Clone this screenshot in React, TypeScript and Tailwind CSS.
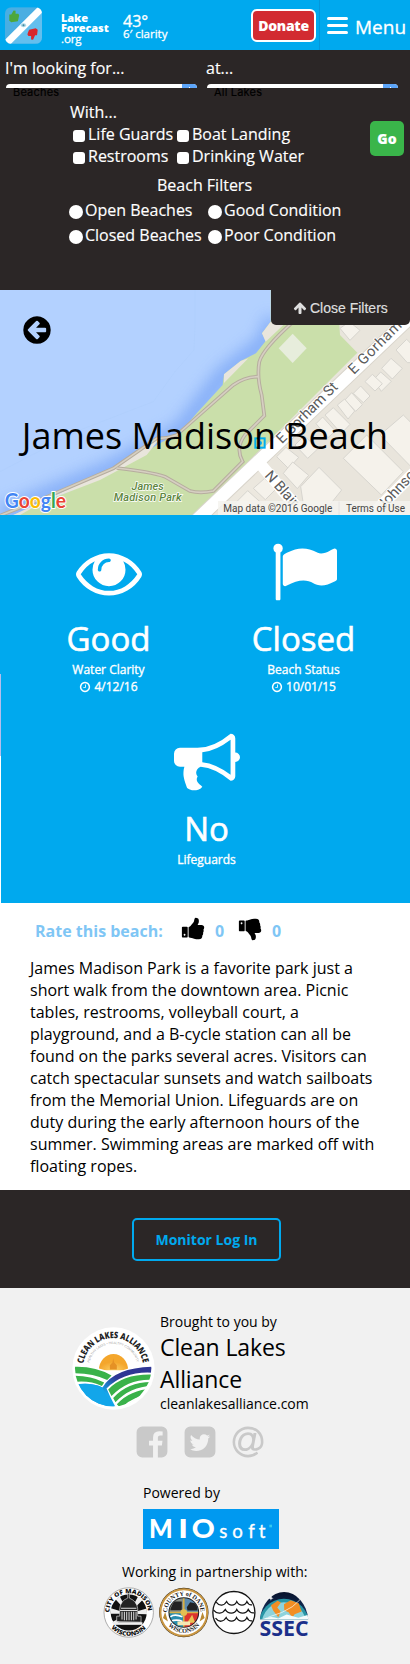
import type { ReactNode } from 'react';

const icons = {
  eye: 'M1664 960q-152-236-381-353 61 104 61 225 0 185-131.5 316.5t-316.5 131.5-316.5-131.5-131.5-316.5q0-121 61-225-229 117-381 353 133 205 333.5 326.5t434.5 121.5 434.5-121.5 333.5-326.5zm-720-384q0-20-14-34t-34-14q-125 0-214.5 89.5t-89.5 214.5q0 20 14 34t34 14 34-14 14-34q0-86 61-147t147-61q20 0 34-14t14-34zm848 384q0 34-20 69-140 230-376.5 368.5t-499.5 138.5-499.5-139-376.5-368q-20-35-20-69t20-69q140-229 376.5-368t499.5-139 499.5 139 376.5 368q20 35 20 69z',
  flag: 'M320 256q0 72-64 110v1266q0 13-9.5 22.5t-22.5 9.5h-64q-13 0-22.5-9.5t-9.5-22.5v-1266q-64-38-64-110 0-53 37.5-90.5t90.5-37.5 90.5 37.5 37.5 90.5zm1472 64v763q0 25-12.5 38.5t-39.5 27.5q-215 116-369 116-61 0-123.5-22t-108.5-48-115.5-48-142.5-22q-192 0-464 146-17 9-33 9-26 0-45-19t-19-45v-742q0-32 31-55 21-14 79-43 236-120 421-120 107 0 200 29t219 88q38 19 88 19 54 0 117.5-21t110-47 88-47 54.5-21q26 0 45 19t19 45z',
  bullhorn: 'M1664 640q53 0 90.5 37.5t37.5 90.5-37.5 90.5-90.5 37.5v384q0 52-38 90t-90 38q-417-347-812-380-58 19-91 66t-31 100.5 40 92.5q-20 33-23 65.5t6 58 33.5 55 48 50 61.5 50.5q-29 58-111.5 83t-168.5 11.5-132-55.5q-7-23-29.5-87.5t-32-94.5-23-89-15-101 3.5-98.5 22-110.5h-122q-66 0-113-47t-47-113v-192q0-66 47-113t113-47h480q435 0 896-384 52 0 90 38t38 90v384zm-128 604v-954q-394 302-768 343v270q377 42 768 341z',
  clock: 'M1024 544v448q0 14-9 23t-23 9h-320q-14 0-23-9t-9-23v-64q0-14 9-23t23-9h224v-352q0-14 9-23t23-9h64q14 0 23 9t9 23zm416 352q0-148-73-273t-198-198-273-73-273 73-198 198-73 273 73 273 198 198 273 73 273-73 198-198 73-273zm224 0q0 209-103 385.5t-279.5 279.5-385.5 103-385.5-103-279.5-279.5-103-385.5 103-385.5 279.5-279.5 385.5-103 385.5 103 279.5 279.5 103 385.5z',
  thumb: 'M320 1344q0-26-19-45t-45-19q-27 0-45.5 19t-18.5 45q0 27 18.5 45.5t45.5 18.5q26 0 45-18.5t19-45.5zm160-512v640q0 26-19 45t-45 19h-288q-26 0-45-19t-19-45v-640q0-26 19-45t45-19h288q26 0 45 19t19 45zm1184 0q0 86-55 149 15 44 15 76 3 76-43 137 17 56 0 117-15 57-54 94 9 112-49 181-64 76-197 78h-129q-66 0-144-15.5t-121.5-29-120.5-39.5q-123-43-158-44-26-1-45-19.5t-19-44.5v-641q0-25 18-43.5t43-20.5q24-2 76-59t101-121q68-87 101-120 18-18 31-48t17.5-48.5 13.5-60.5q7-39 12.5-61t19.5-52 34-50q19-19 45-19 46 0 82.5 10.5t60 26 40 40.5 24 45 12 50 5 45 .5 39q0 38-9.5 76t-19 60-27.5 56q-3 6-10 18t-11 22-8 24h277q78 0 135 57t57 135z',
  back: 'M1408 960v-128q0-26-19-45t-45-19h-502l189-189q19-19 19-45t-19-45l-91-91q-18-18-45-18t-45 18l-362 362-91 91q-18 18-18 45t18 45l91 91 362 362q18 18 45 18t45-18l91-91q18-18 18-45t-18-45l-189-189h502q26 0 45-19t19-45zm256-64q0 209-103 385.5t-279.5 279.5-385.5 103-385.5-103-279.5-279.5-103-385.5 103-385.5 279.5-279.5 385.5-103 385.5 103 279.5 279.5 103 385.5z',
  up: 'M1675 971q0 51-37 90l-75 75q-38 38-91 38-54 0-90-38l-294-293v704q0 52-37.5 84.5t-90.5 32.5h-128q-53 0-90.5-32.5t-37.5-84.5v-704l-294 293q-36 38-90 38t-90-38l-75-75q-38-38-38-90 0-53 38-91l651-651q35-37 90-37 54 0 91 37l651 651q37 39 37 91z',
  facebook: 'M1376 128q119 0 203.5 84.5t84.5 203.5v960q0 119-84.5 203.5t-203.5 84.5h-188v-595h199l30-232h-229v-148q0-56 23.5-84t91.5-28l122-1v-207q-63-9-178-9-136 0-217.5 80t-81.5 226v171h-200v232h200v595h-532q-119 0-203.5-84.5t-84.5-203.5v-960q0-119 84.5-203.5t203.5-84.5h960z',
  twitter: 'M1408 610q-56 25-121 34 68-40 93-117-65 38-134 51-61-66-153-66-87 0-148.5 61.5t-61.5 148.5q0 29 5 48-129-7-242-65t-192-155q-29 50-29 106 0 114 91 175-47-1-100-26v2q0 75 50 133.5t123 72.5q-29 8-51 8-13 0-39-4 21 63 74.5 104t121.5 42q-116 90-261 90-26 0-50-3 148 94 322 94 112 0 210-35.5t168-95 120.5-137 75-162 24.5-168.5q0-18-1-27 63-45 105-109zm256-194v960q0 119-84.5 203.5t-203.5 84.5h-960q-119 0-203.5-84.5t-84.5-203.5v-960q0-119 84.5-203.5t203.5-84.5h960q119 0 203.5 84.5t84.5 203.5z',
  at: 'M1100 775q0-108-53.5-169t-147.5-61q-63 0-124 30.5t-110 84.5-79.5 137-30.5 180q0 112 53.5 173t150.5 61q96 0 176-66.5t122.5-166 42.5-203.5zm564 121q0 111-37 197t-98.5 135-131.5 74.5-145 27.5q-6 .5-15.5.5t-16.5.5q-95 0-142-53-28-33-33-83-52 66-131.5 110t-173.5 44q-161 0-249.5-95.5t-88.5-269.5q0-157 66-290t179-210.5 246-77.5q87 0 155 35.5t106 99.5l2-19 11-56q1-6 5.5-12t9.5-6h118q5 0 13 11 5 5 3 16l-120 614q-5 24-5 48 0 39 12.5 52t44.5 13q28-1 57-5.5t73-24 77-50 57-89.5 24-137q0-292-174-466t-466-174q-130 0-248.5 51t-204 136.5-136.5 204-51 248.5 51 248.5 136.5 204 204 136.5 248.5 51q228 0 405-144 11-9 24-8t21 12l41 49q8 12 7 24-2 13-12 22-102 83-227.5 128t-258.5 45q-156 0-298-61t-245-164-164-245-61-298 61-298 164-245 245-164 298-61q344 0 556 212t212 556z',
};

function Icon({ name, className }: { name: keyof typeof icons; className: string }) {
  return (
    <svg viewBox="0 0 1792 1792" fill="currentColor" className={className}>
      <path d={icons[name]} />
    </svg>
  );
}

function AppLogo() {
  return (
    <svg viewBox="15 21 112 111" className="mt-[7px] h-[37px] w-[37px] shrink-0">
      <defs>
        <clipPath id="app-clip">
          <rect x="15" y="21" width="112" height="111" rx="19" />
        </clipPath>
      </defs>
      <g clipPath="url(#app-clip)">
        <rect x="15" y="21" width="112" height="111" fill="#4aaee2" />
        <path d="M127 21V132H30z" fill="#63bfee" />
        <path d="M10 125L118 17L133 32L28 137z" fill="#fff" />
        <ellipse cx="71" cy="76" rx="8" ry="6" fill="#a9d8e8" />
        <circle cx="71" cy="76" r="3" fill="#47859a" />
        <path d="M28 43h6l7-12 6 1v9h8q5 3 2 9l-3 14-20 3-6-5z" fill="#4da73c" />
        <path d="M112 106h-6l-6 14-6-1v-11h-8q-5-4-2-9l4-10 20-4 6 4z" fill="#d8262d" />
      </g>
    </svg>
  );
}

function Header() {
  return (
    <header className="flex h-[50px] bg-[#00a9ee] pl-[5px] text-white">
      <AppLogo />
      <div className="ml-[19px] w-[62px] pt-[13px] text-[11px] leading-[10px] font-extrabold tracking-[-0.1px]">
        <p>Lake</p>
        <p>Forecast</p>
        <p className="pt-px text-[11.5px] font-normal [-webkit-text-stroke:0.3px_white]">.org</p>
      </div>
      <div className="w-[128px] pt-[12px]">
        <p className="text-base leading-[19px] [-webkit-text-stroke:0.35px_white]">43°</p>
        <p className="text-[11.5px] leading-[6px] [-webkit-text-stroke:0.3px_white]">6′ clarity</p>
      </div>
      <button className="mt-[9px] h-[33px] w-[65px] rounded-[6px] border-2 border-white bg-[#d22b31] text-[14px] leading-[29px] font-extrabold tracking-[-0.3px]">
        Donate
      </button>
      <div className="ml-[3px] flex flex-1 border-l border-[#0398dc] pl-[7px]">
        <div className="mt-[17px] flex h-[17px] w-[21px] flex-col justify-between">
          <i className="h-[3px] rounded-sm bg-white" />
          <i className="h-[3px] rounded-sm bg-white" />
          <i className="h-[3px] rounded-sm bg-white" />
        </div>
        <span className="ml-[7px] pt-[14px] text-[19px] leading-[27px] [-webkit-text-stroke:0.3px_white]">Menu</span>
      </div>
    </header>
  );
}

function Select({ label, value }: { label: string; value: string }) {
  return (
    <div className="w-[191px]">
      <p className="-ml-px h-[34px] text-base leading-[36px]">{label}</p>
      <div className="flex h-[4px] justify-end overflow-hidden rounded-t-[4px] bg-white">
        <span className="flex w-[15px] items-end justify-center bg-[#5ca4f8]">
          <i className="h-px w-px bg-white" />
        </span>
      </div>
      <p className="pl-[7px] font-[Inter,sans-serif] text-[11px] leading-[9px] tracking-[0.2px] text-black">{value}</p>
    </div>
  );
}

function Check({ label }: { label: string }) {
  return (
    <label className="flex h-[22px] whitespace-nowrap">
      <i className="mt-[6px] mr-[3px] h-[12px] w-[12px] rounded-[3px] bg-white" />
      <span className="leading-[20px]">{label}</span>
    </label>
  );
}

function Radio({ label }: { label: string }) {
  return (
    <label className="flex h-[25px] whitespace-nowrap">
      <i className="mt-[7px] mr-[2px] h-[14px] w-[14px] rounded-full bg-white" />
      <span className="leading-[25px]">{label}</span>
    </label>
  );
}

function Filters() {
  return (
    <section className="h-[240px] bg-[#2b2626] text-white [-webkit-text-stroke:0.15px_currentColor]">
      <div className="flex gap-[10px] pl-[6px]">
        <Select label="I'm looking for..." value="Beaches" />
        <Select label="at..." value="All Lakes" />
      </div>
      <div className="flex justify-between pt-[3px] pr-[6px] pl-[69px]">
        <div>
          <p className="pl-px leading-[24px]">With...</p>
          <div className="grid grid-cols-[104px_auto] pl-[4px]">
            <Check label="Life Guards" />
            <Check label="Boat Landing" />
            <Check label="Restrooms" />
            <Check label="Drinking Water" />
          </div>
          <p className="mt-[4px] pl-[88px] leading-[26px]">Beach Filters</p>
          <div className="grid grid-cols-[139px_auto]">
            <Radio label="Open Beaches" />
            <Radio label="Good Condition" />
            <Radio label="Closed Beaches" />
            <Radio label="Poor Condition" />
          </div>
        </div>
        <button className="mt-[21px] h-[35px] w-[34px] rounded-[5px] bg-[#3ab54a] text-[14px] leading-[35px] font-extrabold">
          Go
        </button>
      </div>
    </section>
  );
}

const buildings = [
  'M1120 285l22-24 32 28-30 30z', 'M1145 250l28-30 34 30-30 32z', 'M1188 195l32-32 20 20v50h-18z',
  'M1095 290l22-22 30 28-22 22z', 'M1035 345l20-22 32 36-20 20z', 'M1060 325l22-22 28 30-20 20z',
  'M1012 360l22-18 30 36-20 24z', 'M975 390l25-22 50 50-26 28z', 'M948 416l20-20 38 42-22 20z',
  'M885 480l28-28 40 40-30 28z', 'M830 515l28-28 38 30-30 34z', 'M850 565l28-34 48 40-34 40z',
  'M902 605l55-58 68 68-60 75h-50z', 'M1030 520l70-70 110 110-66 70z', 'M1140 450l70-60 40 40v90l-20 22z',
  'M760 610l34-30 32 34-30 30z', 'M705 655l38-38 40 36-40 42z', 'M1020 130l28-20 32 26-30 30z',
];

function MapDrawing() {
  return (
    <svg viewBox="0 15 1230 675" className="absolute inset-0 h-full w-full" fontFamily="Roboto, sans-serif">
      <defs>
        <filter id="shore" x="-20%" y="-20%" width="140%" height="140%">
          <feGaussianBlur stdDeviation="24" />
        </filter>
      </defs>
      <path d="M0 0H1230V700H0z" fill="#b3d1ff" />
      <path
        d="M0 690L340 550L545 437L672 270L800 170L820 100"
        fill="none"
        stroke="#78a4f5"
        strokeWidth="50"
        opacity=".85"
        filter="url(#shore)"
      />
      <path d="M585 0V120L582 195L525 260L460 350L240 435L0 560" fill="none" stroke="#a9c9f8" strokeWidth="2" opacity=".4" />
      <path d="M40 690L320 572L440 498L545 437L590 385L668 300L672 268L722 228L768 205L797 168L786 145L812 110V0H1230V690z" fill="#cadfaa" />
      <path d="M672 268L722 228L745 220L672 294zM786 145L812 110L850 120L797 170zM40 690L340 550L480 460L440 510L300 585L130 650L60 690z" fill="#e9e5dc" />
      <path d="M1018 120L1020 150L1072 203L545 730H1230V0H1018z" fill="#e9e5dc" />
      <path d="M600 690L770 525L795 530L905 690z" fill="#ece8df" />
      <g fill="#f5f2eb" stroke="#d7d5cf" strokeWidth="3">
        {buildings.map((d) => (
          <path key={d} d={d} />
        ))}
      </g>
      <path d="M878 146L920 190L878 234L836 190z" fill="#e7eddc" />
      <g fill="none" stroke="#b6ad9e" strokeWidth="11">
        <path d="M880 110Q790 190 778 230Q770 275 785 330L793 392L735 450Q705 490 728 530L640 618Q600 626 570 618L495 575Q450 560 350 549" />
        <path d="M776 275Q735 275 700 300L530 450Q500 462 470 460L340 550L130 640L0 692" />
      </g>
      <g fill="none" stroke="#d6cfc2" strokeWidth="5">
        <path d="M880 110Q790 190 778 230Q770 275 785 330L793 392L735 450Q705 490 728 530L640 618Q600 626 570 618L495 575Q450 560 350 549" />
        <path d="M776 275Q735 275 700 300L530 450Q500 462 470 460L340 550L130 640L0 692" />
      </g>
      <path d="M580 715L1240 88" stroke="#d8d4cb" strokeWidth="44" />
      <path d="M580 715L1240 88" stroke="#fff" strokeWidth="38" />
      <path d="M775 530L910 690M1245 560L1105 700" stroke="#fff" strokeWidth="35" />
      <g fill="#5b5b5b" stroke="#fff" strokeWidth="5" paintOrder="stroke" fontSize="44">
        <text transform="translate(846 478) rotate(-45)" textLength="240">E Gorham St</text>
        <text transform="translate(1062 270) rotate(-45)" textLength="206">E Gorham</text>
        <text transform="translate(792 573) rotate(48)" textLength="128">N Blair</text>
        <text transform="translate(1150 678) rotate(-47)">Johnson</text>
      </g>
      <g fill="#5d8640" stroke="#fff" strokeWidth="4" paintOrder="stroke" fontSize="33" fontStyle="italic" fontWeight="500" textAnchor="middle">
        <text x="443" y="616">James</text>
        <text x="443" y="648" textLength="204">Madison Park</text>
      </g>
      <rect x="766" y="460" width="28" height="28" fill="none" stroke="#00aeef" strokeWidth="6" />
      <circle cx="780" cy="474" r="6" fill="#00aeef" />
      <rect x="654" y="648" width="576" height="42" fill="#f5f3ef" opacity=".85" />
      <path d="M1017 650V690" stroke="#ddd" strokeWidth="2" />
      <g fill="#444" fontSize="30">
        <text x="670" y="681" textLength="327">Map data ©2016 Google</text>
        <text x="1038" y="681" textLength="177">Terms of Use</text>
      </g>
      <text x="14" y="668" fontFamily="Lato, sans-serif" fontSize="64" fontWeight="700" textLength="184" lengthAdjust="spacingAndGlyphs" stroke="#fff" strokeWidth="6" paintOrder="stroke">
        <tspan fill="#4285f4">G</tspan>
        <tspan fill="#ea4335">o</tspan>
        <tspan fill="#fbbc05">o</tspan>
        <tspan fill="#4285f4">g</tspan>
        <tspan fill="#34a853">l</tspan>
        <tspan fill="#ea4335">e</tspan>
      </text>
    </svg>
  );
}

function MapHero() {
  return (
    <section className="relative h-[225px] overflow-hidden">
      <MapDrawing />
      <button className="absolute top-[-3px] right-0 flex h-[38px] w-[139px] items-center rounded-b-[5px] bg-[#2b2626] pl-[22px] font-['Liberation_Sans',sans-serif] text-[14px] text-[#dedede]">
        <Icon name="up" className="mt-[3px] mr-[3px] h-[14px] w-[14px]" />
        <span className="mt-[5px] [-webkit-text-stroke:0.2px_#dedede]">Close Filters</span>
      </button>
      <Icon name="back" className="absolute top-[24px] left-[21px] h-[32px] w-[32px] text-black" />
      <h1 className="absolute top-[121px] left-0 w-full text-center text-[36px] leading-[50px] whitespace-nowrap text-black">
        James Madison Beach
      </h1>
    </section>
  );
}

function Stat({ icon, value, label, date }: { icon: keyof typeof icons; value: string; label: string; date?: string }) {
  return (
    <div className="flex flex-col items-center">
      <Icon name={icon} className="h-[66px] w-[66px]" />
      <p className="mt-[11px] text-[33px] leading-[46px] [-webkit-text-stroke:0.6px_white]">{value}</p>
      <p className="-mt-px text-[12px] leading-[17px] [-webkit-text-stroke:0.35px_white]">{label}</p>
      {date && (
        <p className="flex items-center text-[12px] leading-[17px] [-webkit-text-stroke:0.35px_white]">
          <Icon name="clock" className="mr-[3px] h-[12px] w-[12px]" />
          {date}
        </p>
      )}
    </div>
  );
}

function Stats() {
  return (
    <section className="flex h-[388px]">
      <div className="flex w-px flex-col">
        <i className="h-[159px] bg-[#00a9ee]" />
        <i className="h-[82px] bg-[#b5bdec]" />
      </div>
      <div className="flex-1 bg-[#00a9ee] pt-[24px] text-white">
        <div className="grid h-[190px] grid-cols-[195px_195px] pl-[10px]">
          <Stat icon="eye" value="Good" label="Water Clarity" date="4/12/16" />
          <Stat icon="flag" value="Closed" label="Beach Status" date="10/01/15" />
        </div>
        <div className="pl-[2px]">
          <Stat icon="bullhorn" value="No" label="Lifeguards" />
        </div>
      </div>
    </section>
  );
}

function Details() {
  return (
    <section className="h-[287px] bg-white">
      <div className="flex h-[53px] pt-[12px] pl-[35px] text-base leading-[32px] font-bold text-[#7fc6f5]">
        <span className="w-[146px]">Rate this beach:</span>
        <Icon name="thumb" className="mt-px h-[25px] w-[25px] text-black" />
        <span className="ml-[9px] w-[23px]">0</span>
        <Icon name="thumb" className="mt-[2px] h-[25px] w-[25px] -scale-y-100 text-black" />
        <span className="ml-[9px]">0</span>
      </div>
      <p className="w-[360px] pt-[1px] pl-[30px] text-base leading-[22px] whitespace-pre text-black">
        {`James Madison Park is a favorite park just a
short walk from the downtown area. Picnic
tables, restrooms, volleyball court, a
playground, and a B-cycle station can all be
found on the parks several acres. Visitors can
catch spectacular sunsets and watch sailboats
from the Memorial Union. Lifeguards are on
duty during the early afternoon hours of the
summer. Swimming areas are marked off with
floating ropes.`}
      </p>
    </section>
  );
}

function CleanLakesLogo() {
  return (
    <svg viewBox="36 80 250 250" className="mt-[20px] h-[83px] w-[83px] shrink-0">
      <defs>
        <clipPath id="cl-clip">
          <circle cx="160" cy="204" r="115" />
        </clipPath>
        <path id="cl-arc" d="M70 191A91 91 0 0 1 250 191" />
        <path id="cl-arc2" d="M88 188A74 74 0 0 1 232 188" />
        <linearGradient id="cl-river" x1="0" y1="1" x2="1" y2="0">
          <stop offset=".4" stopColor="#14a6ea" />
          <stop offset=".65" stopColor="#2f3694" />
        </linearGradient>
        <radialGradient id="cl-sun" cy="1">
          <stop offset="0" stopColor="#fbd168" />
          <stop offset="1" stopColor="#f4a62c" />
        </radialGradient>
      </defs>
      <circle cx="161" cy="205" r="124" fill="#fff" />
      <g clipPath="url(#cl-clip)">
        <path d="M117 210A44 49 0 0 1 205 210z" fill="url(#cl-sun)" />
        <path d="M150 208V195L158 187L160 174L163 187L171 195V208z" fill="#e59125" />
        <path d="M40 195Q110 195 165 222Q210 195 280 198V330H40z" fill="#fff" />
        <path d="M40 200Q105 197 155 226L142 240Q100 218 40 219z" fill="#3ab24a" />
        <path d="M40 227Q92 226 133 247L126 258Q88 240 40 246z" fill="#3ab24a" />
        <path d="M40 255Q90 245 128 262Q165 202 280 200V218Q195 212 140 265Q155 300 172 330H40z" fill="url(#cl-river)" />
        <path d="M40 255Q90 245 128 262Q140 300 168 325H40z" fill="#12a6ea" />
        <path d="M145 268Q190 220 280 223V239Q205 235 155 288z" fill="#3ab24a" />
        <path d="M160 294Q205 244 280 246V258Q213 258 167 307z" fill="#3ab24a" />
        <path d="M171 313Q212 268 280 266V282Q218 286 183 325z" fill="#3ab24a" />
        <path d="M195 322Q220 294 270 289V325z" fill="#3ab24a" />
      </g>
      <text fontFamily="Open Sans, sans-serif" fontSize="27" fontWeight="800" fill="#222">
        <textPath href="#cl-arc" textLength="256" lengthAdjust="spacingAndGlyphs">CLEAN LAKES ALLIANCE</textPath>
      </text>
      <text fontFamily="Open Sans, sans-serif" fontSize="10" fill="#999">
        <textPath href="#cl-arc2" textLength="195" lengthAdjust="spacingAndGlyphs">HEALTHY LAKES • HEALTHY COMMUNITY</textPath>
      </text>
    </svg>
  );
}

function PartnerLogos() {
  const wave = 'M0 0q8 10 18 9t16-11q6 11 17 11t16-11q6 11 17 11t16-11q6 12 17 10';
  return (
    <svg viewBox="40 335 620 155" className="mt-[5px] ml-[103px] h-[52px] w-[207px]" fontFamily="Open Sans, sans-serif">
      <defs>
        <path id="mad-top" d="M59 411A58 58 0 0 1 175 411" />
        <path id="mad-bot" d="M47 411A70 70 0 0 0 187 411" />
        <path id="dane-top" d="M232 411A50 50 0 0 1 332 411" />
        <path id="dane-bot" d="M221 411A61 61 0 0 0 343 411" />
        <clipPath id="dane-clip"><circle cx="282" cy="411" r="43" /></clipPath>
        <clipPath id="ssec-clip"><path d="M510 432A73 93 0 0 1 655 432z" /></clipPath>
        <linearGradient id="ssec-sky" x1="0" y1="0" x2="0" y2="1">
          <stop offset="0" stopColor="#050a1e" />
          <stop offset="1" stopColor="#173c72" />
        </linearGradient>
      </defs>
      <circle cx="117" cy="411" r="74" fill="#fff" stroke="#888" strokeWidth="2" />
      <circle cx="117" cy="411" r="54" fill="#111" />
      <path d="M117 415L62 415L64 398zM117 415L78 372L90 362zM117 415L160 372L145 363zM117 415L171 399L172 416zM117 415L66 440L74 450z" fill="#eee" />
      <path d="M81 438V422H90V400Q92 376 114 368V354H119V368Q142 377 144 400V422H154V440z" fill="#222" stroke="#ddd" strokeWidth="2" />
      <path d="M94 398H140M91 405H143M97 409V432M104 409V434M111 409V434M118 409V434M125 409V434M132 409V434M139 409V432" stroke="#ddd" strokeWidth="3" />
      <path d="M76 440H158V448H76z" fill="#eee" />
      <g fontSize="18" fontWeight="800" fill="#111">
        <text><textPath href="#mad-top" textLength="178" lengthAdjust="spacingAndGlyphs">CITY OF MADISON</textPath></text>
        <text><textPath href="#mad-bot" startOffset="50" textLength="118" lengthAdjust="spacingAndGlyphs">WISCONSIN</textPath></text>
      </g>
      <circle cx="282" cy="411" r="74" fill="#2c2414" />
      <circle cx="282" cy="411" r="70" fill="#fff" stroke="#c99642" strokeWidth="6" />
      <circle cx="282" cy="411" r="46" fill="#222" />
      <g clipPath="url(#dane-clip)">
        <path d="M238 366H281V410H238z" fill="#8b9088" />
        <path d="M283 366H327V410H283z" fill="#5b8bb0" />
        <path d="M238 412H281V456H238z" fill="#288dae" />
        <path d="M283 412H327V456H283z" fill="#dc342e" />
        <path d="M242 400L252 378H276V404H242zM291 395L301 380L323 385V405H293z" fill="#222" />
        <path d="M242 424Q254 414 278 424M242 438Q260 430 278 438" stroke="#fff" strokeWidth="5" fill="none" />
        <path d="M292 442L307 418L316 442z" fill="#eac454" />
        <path d="M282 366V456M238 411H327" stroke="#d8b246" strokeWidth="5" />
        <circle cx="282" cy="411" r="10" fill="#e2bf52" />
        <path d="M263 438H301V449H263z" fill="#f5e8b4" />
      </g>
      <path d="M226 416l5 17-9-6zM338 416l-5 17 9-6z" fill="#b98a34" stroke="#b98a34" strokeWidth="4" />
      <g fontFamily="Liberation Serif, serif" fontSize="19" fontWeight="700" fill="#222">
        <text><textPath href="#dane-top" textLength="155" lengthAdjust="spacingAndGlyphs">COUNTY of DANE</textPath></text>
        <text><textPath href="#dane-bot" startOffset="42" textLength="108" lengthAdjust="spacingAndGlyphs">WISCONSIN</textPath></text>
      </g>
      <circle cx="432" cy="411" r="63" fill="#fff" stroke="#151515" strokeWidth="4" />
      <g fill="none" stroke="#151515" strokeWidth="4">
        <path transform="translate(379 380) scale(.92 1)" d={wave} />
        <path transform="translate(371 404) scale(1.04 1)" d={wave} />
        <path transform="translate(377 428) scale(.94 1)" d={wave} />
      </g>
      <g clipPath="url(#ssec-clip)">
        <path d="M505 335H660V435H505z" fill="url(#ssec-sky)" />
        <circle cx="582" cy="445" r="75" fill="#2896a6" />
        <circle cx="582" cy="447" r="67" fill="#8ed3dc" />
        <path d="M543 389L563 376L573 381L562 396L572 408L565 425L550 406zM582 386L602 374L626 383L635 408L614 416L607 427L596 410L583 405z" fill="#f18e24" />
        <path d="M510 435Q540 417 565 429L590 417L625 427L655 418V440H510z" fill="#f5fbfc" />
        <path d="M535 425Q625 400 643 350" fill="none" stroke="#fff" strokeWidth="2" />
      </g>
      <path d="M543 360l2 6 6 2-6 2-2 6-2-6-6-2 6-2z" fill="#fff" />
      <text x="509" y="482" fontSize="66" fontWeight="700" fill="#1b2f8a" textLength="147" lengthAdjust="spacingAndGlyphs">SSEC</text>
    </svg>
  );
}

function FooterLine({ children, className }: { children: ReactNode; className: string }) {
  return <p className={`whitespace-nowrap ${className}`}>{children}</p>;
}

function Footer() {
  return (
    <footer className="h-[376px] bg-[#f1f1f1] pt-[19px] text-black">
      <div className="flex h-[108px] pl-[72px]">
        <CleanLakesLogo />
        <div className="ml-[5px]">
          <FooterLine className="pt-[5px] text-[14px] leading-[20px]">Brought to you by</FooterLine>
          <FooterLine className="-mt-px text-[23px] leading-[32px] tracking-[-0.1px]">Clean Lakes</FooterLine>
          <FooterLine className="text-[23px] leading-[32px] tracking-[-0.1px]">Alliance</FooterLine>
          <FooterLine className="-mt-px text-[14px] leading-[20px]">cleanlakesalliance.com</FooterLine>
        </div>
      </div>
      <div className="mt-[9px] flex h-[56px] gap-[12px] pl-[134px] text-[#c9c9c9]">
        <Icon name="facebook" className="h-[36px] w-[36px]" />
        <Icon name="twitter" className="h-[36px] w-[36px]" />
        <Icon name="at" className="h-[36px] w-[36px]" />
      </div>
      <FooterLine className="pt-[2px] pl-[143px] text-[14px] leading-[22px]">Powered by</FooterLine>
      <svg viewBox="159 102 408 120" className="mt-[5px] ml-[143px] h-[40px] w-[136px] bg-[#0099f0]" fill="#fff">
        <g fontFamily="Lato, sans-serif" fontWeight="900" fontSize="78">
          <text x="177" y="189" textLength="71" lengthAdjust="spacingAndGlyphs">M</text>
          <text x="265" y="189" textLength="29" lengthAdjust="spacingAndGlyphs">I</text>
          <text x="305" y="189" textLength="69" lengthAdjust="spacingAndGlyphs">O</text>
        </g>
        <text x="388 427 475 506" y="189" fontFamily="Lato, sans-serif" fontSize="56" stroke="#fff">soft</text>
        <rect x="538" y="149" width="8" height="8" fill="#35c9ef" />
      </svg>
      <FooterLine className="pt-[13px] pl-[122px] text-[14px] leading-[20px]">Working in partnership with:</FooterLine>
      <PartnerLogos />
    </footer>
  );
}

export default function App() {
  return (
    <main className="h-[1664px] w-[410px] overflow-hidden bg-white font-['Open_Sans',sans-serif]">
      <Header />
      <Filters />
      <MapHero />
      <Stats />
      <Details />
      <section className="flex h-[98px] bg-[#2b2626] pt-[28px] pl-[132px]">
        <button className="h-[43px] w-[149px] rounded-[5px] border-2 border-[#00a9ee] text-[14px] leading-[39px] font-bold text-[#00a9ee]">
          Monitor Log In
        </button>
      </section>
      <Footer />
    </main>
  );
}
